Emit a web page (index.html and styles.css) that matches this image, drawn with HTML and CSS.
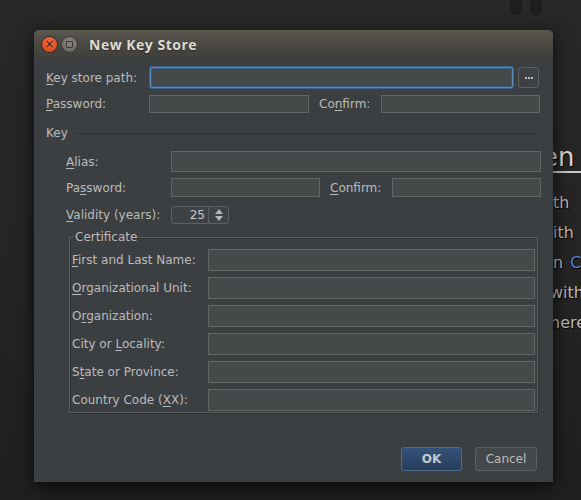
FILE: index.html
```html
<!DOCTYPE html>
<html>
<head>
<meta charset="utf-8">
<link rel="stylesheet" href="styles.css">
</head>
<body>
<div class="desktop">
  <div class="pause"><span></span><span></span></div>
  <div class="doc">
    <div class="doc-title">een</div>
    <div class="doc-line">th</div>
    <div class="doc-line">ith</div>
    <div class="doc-line">n <span class="link">C</span></div>
    <div class="doc-line shift">with</div>
    <div class="doc-line shift">here</div>
  </div>

  <div class="dialog">
    <div class="titlebar">
      <span class="wbtn close">×</span>
      <span class="wbtn max"><i></i></span>
      <span class="title">New Key Store</span>
    </div>
    <div class="content">
      <div class="row r-path">
        <label><u>K</u>ey store path:</label>
        <div class="input focus"></div>
        <div class="browse"><i></i><i></i><i></i></div>
      </div>
      <div class="row r-pass">
        <label><u>P</u>assword:</label>
        <div class="input small"></div>
        <label class="pad">Co<u>n</u>firm:</label>
        <div class="input small"></div>
      </div>

      <div class="section"><span>Key</span><i></i></div>

      <div class="keyblock">
        <div class="row r-alias">
          <label><u>A</u>lias:</label>
          <div class="input"></div>
        </div>
        <div class="row r-kpass">
          <label>Pa<u>s</u>sword:</label>
          <div class="input mid"></div>
          <label class="pad"><u>C</u>onfirm:</label>
          <div class="input mid"></div>
        </div>
        <div class="row r-valid">
          <label><u>V</u>alidity (years):</label>
          <div class="spinner">
            <span class="val">25</span>
            <span class="arrows"><i class="up"></i><i class="down"></i></span>
          </div>
        </div>

        <fieldset class="cert">
          <legend>Certificate</legend>
          <div class="crow"><label><u>F</u>irst and Last Name:</label><div class="input"></div></div>
          <div class="crow"><label><u>O</u>rganizational Unit:</label><div class="input"></div></div>
          <div class="crow"><label>O<u>r</u>ganization:</label><div class="input"></div></div>
          <div class="crow"><label>City or <u>L</u>ocality:</label><div class="input"></div></div>
          <div class="crow"><label>S<u>t</u>ate or Province:</label><div class="input"></div></div>
          <div class="crow"><label>Country Code (<u>X</u>X):</label><div class="input"></div></div>
        </fieldset>
      </div>

      <div class="buttons">
        <button class="btn ok">OK</button>
        <button class="btn cancel">Cancel</button>
      </div>
    </div>
  </div>
</div>
</body>
</html>
```
FILE: styles.css
```css
* { box-sizing: border-box; }
html, body { margin: 0; padding: 0; }
body {
  width: 581px;
  height: 500px;
  overflow: hidden;
  background: #262626;
  font-family: "DejaVu Sans", sans-serif;
}
.desktop {
  position: relative;
  width: 581px;
  height: 500px;
  overflow: hidden;
  background: linear-gradient(#282828, #242424 60%, #1f1f1f);
}
.pause {
  position: absolute;
  left: 510px;
  top: -6px;
  display: flex;
  gap: 8px;
}
.pause span {
  width: 12px;
  height: 21px;
  border-radius: 6px;
  background: #1e1e1e;
}
.doc {
  position: absolute;
  left: 536px;
  top: 140px;
  width: 45px;
  overflow: hidden;
  color: #b8b8b8;
  font-family: "DejaVu Sans", sans-serif;
  text-shadow: 1px 1px 1px #000;
  white-space: nowrap;
}
.doc-title {
  font-size: 26px;
  line-height: 34px;
  height: 33px;
  border-bottom: 2px solid #c8c8c8;
  color: #d8d8d8;
  text-indent: -10px;
}
.doc-line {
  font-size: 16px;
  line-height: 30px;
  padding-left: 17px;
}
.doc-title + .doc-line { margin-top: 15px; }
.doc-line.shift { padding-left: 14px; }
.link { color: #4f7ed8; margin-left: 2px; }

.dialog {
  position: absolute;
  left: 34px;
  top: 30px;
  width: 519px;
  height: 452px;
  display: flex;
  flex-direction: column;
  background: #3c3f41;
  border-radius: 5px 5px 0 0;
  box-shadow: 0 4px 18px rgba(0,0,0,0.75);
}
.titlebar {
  height: 28px;
  flex: none;
  display: flex;
  align-items: center;
  padding-left: 8px;
  border-radius: 5px 5px 0 0;
  background: linear-gradient(#5b5850, #4b4943 50%, #403f3b);
}
.wbtn {
  width: 15px;
  height: 15px;
  border-radius: 50%;
  display: flex;
  align-items: center;
  justify-content: center;
  margin-right: 5px;
}
.close {
  background: radial-gradient(circle at 50% 35%, #f2734a, #df4c1f 70%, #b83d17);
  color: #3a1a0e;
  font-size: 12px;
  line-height: 1;
  font-family: "DejaVu Sans", sans-serif;
  box-shadow: 0 0 0 1px #3b2a22;
}
.max {
  background: radial-gradient(circle at 50% 35%, #8a8780, #6f6d67 70%, #5e5c57);
  box-shadow: 0 0 0 1px #3a3935;
}
.max i {
  width: 7px;
  height: 7px;
  border: 1px solid #3a3935;
  border-radius: 1px;
}
.title {
  margin-left: 7px;
  font-family: "Open Sans", sans-serif;
  font-weight: 700;
  font-size: 14px;
  letter-spacing: 0.5px;
  color: #dfdbd2;
  text-shadow: 0 1px 1px #2a2926;
}

.content {
  flex: 1;
  display: flex;
  flex-direction: column;
  padding: 9px 14px 11px 12px;
  color: #bbbbbb;
  font-size: 12px;
}
label { white-space: nowrap; }
u { text-decoration-thickness: 1px; text-underline-offset: 2px; }
.row {
  display: grid;
  align-items: center;
}
.input {
  height: 100%;
  background: #45494a;
  border: 1px solid #646464;
}
.input.focus {
  border: 1px solid #5b8cc0;
  border-radius: 2px;
  box-shadow: 0 0 0 1px #3d6286, inset 0 0 0 1px #385a7c;
}
.r-path {
  height: 21px;
  grid-template-columns: 104px 363px 26px;
}
.browse {
  justify-self: end;
  width: 21px;
  height: 21px;
  border: 1px solid #5e6163;
  border-radius: 3px;
  background: #3e4143;
  display: flex;
  align-items: center;
  justify-content: center;
  gap: 1px;
}
.browse i {
  width: 2px;
  height: 2px;
  background: #c0c0c0;
}
.r-pass {
  margin-top: 7px;
  height: 18px;
  grid-template-columns: 103px 160px 72px 159px;
}
.pad { padding-left: 10px; }

.section {
  margin-top: 13px;
  height: 14px;
  display: flex;
  align-items: center;
}
.section i {
  flex: 1;
  margin-left: 8px;
  height: 1px;
  background: #2c2e30;
}
.keyblock {
  padding-left: 20px;
}
.r-alias {
  margin-top: 11px;
  height: 21px;
  grid-template-columns: 105px 370px;
}
.r-kpass {
  margin-top: 6px;
  height: 19px;
  grid-template-columns: 105px 149px 72px 149px;
}
.r-valid {
  margin-top: 9px;
  height: 18px;
  grid-template-columns: 105px 58px;
}
.spinner {
  height: 18px;
  border: 1px solid #5e6163;
  border-radius: 3px;
  background: #3f4244;
  display: flex;
  align-items: stretch;
}
.spinner .val {
  flex: 1;
  text-align: right;
  padding-right: 3px;
  line-height: 16px;
  border-right: 1px solid #5e6163;
  color: #c8c8c8;
}
.arrows {
  width: 19px;
  display: flex;
  flex-direction: column;
  align-items: center;
  justify-content: center;
  gap: 2px;
}
.arrows i {
  width: 0;
  height: 0;
  border-left: 4px solid transparent;
  border-right: 4px solid transparent;
}
.arrows .up { border-bottom: 5px solid #b4b4b4; }
.arrows .down { border-top: 5px solid #b4b4b4; }

.cert {
  margin: 6px 0 0 3px;
  width: 469px;
  padding: 5px 2px 1px 2px;
  border: 1px solid #5a5d5f;
  box-shadow: inset 1px 1px 0 #2f3133, 1px 1px 0 #2f3133;
  display: flex;
  flex-direction: column;
  gap: 6px;
}
.cert legend {
  padding: 0 1px;
  margin-left: 2px;
  font-size: 12px;
  line-height: 14px;
  color: #bbbbbb;
}
.crow {
  display: grid;
  grid-template-columns: 136px 327px;
  height: 22px;
  align-items: center;
}

.buttons {
  margin-top: auto;
  display: flex;
  justify-content: flex-end;
  gap: 13px;
  padding-right: 2px;
}
.btn {
  height: 24px;
  font-family: "DejaVu Sans", sans-serif;
  font-size: 12px;
  border-radius: 3px;
  padding: 0;
}
.ok {
  width: 61px;
  background: linear-gradient(#34537a, #263d5a);
  border: 1px solid #4a6a90;
  color: #c8c8c8;
  font-weight: 700;
}
.cancel {
  width: 62px;
  background: #45484a;
  border: 1px solid #5e6163;
  color: #bbbbbb;
}
```
